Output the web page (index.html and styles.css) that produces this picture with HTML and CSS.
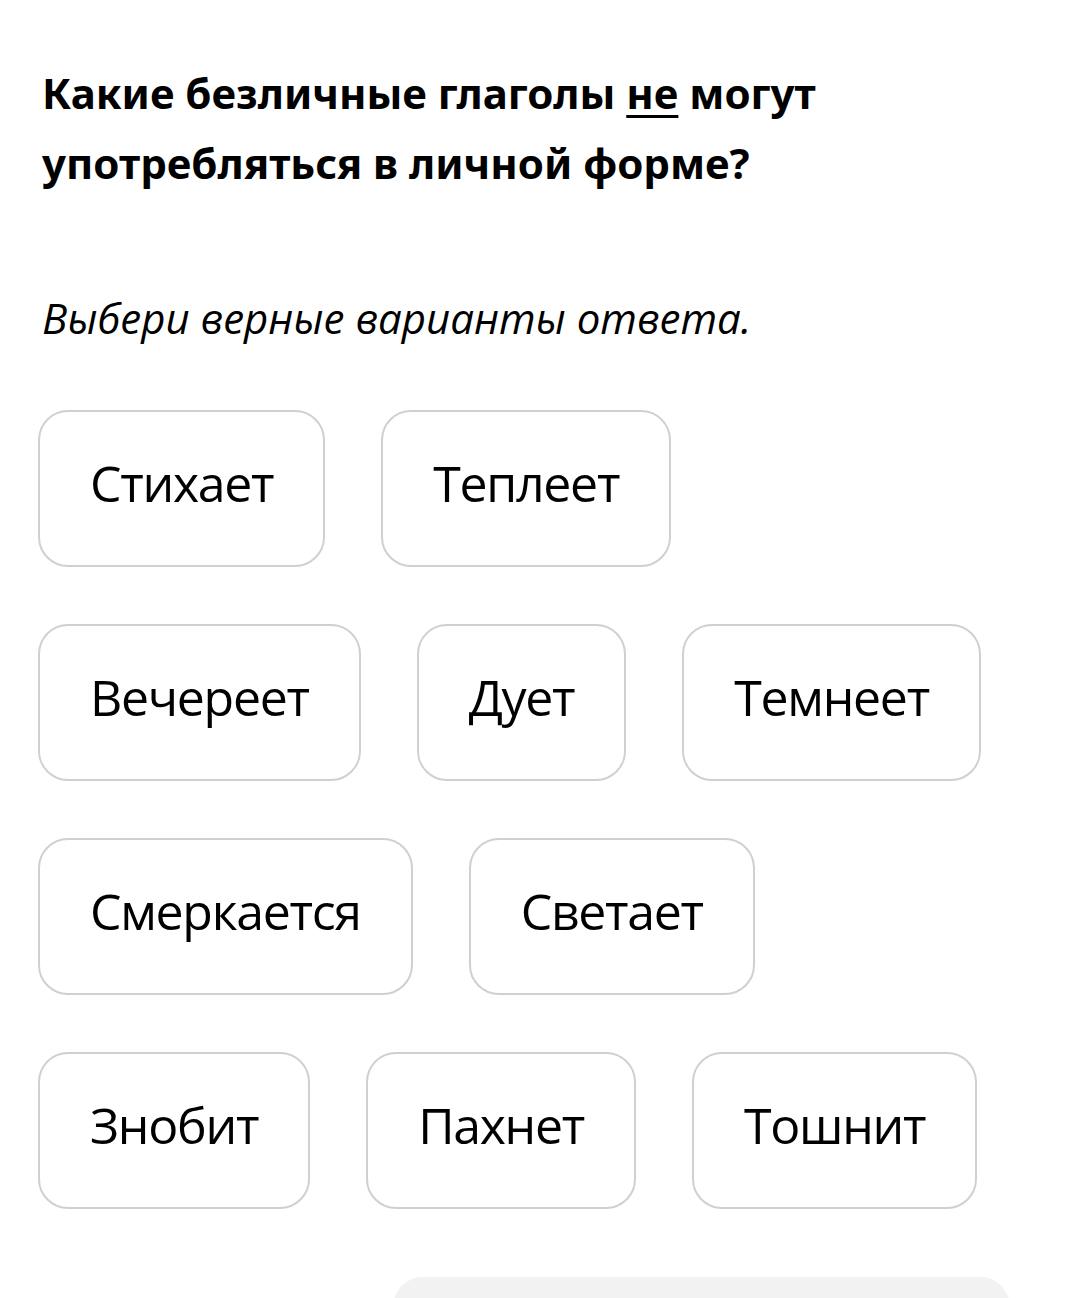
FILE: index.html
```html
<!DOCTYPE html>
<html lang="ru">

<head>
  <meta charset="UTF-8">
  <meta name="viewport" content="width=device-width, initial-scale=1.0">
  <title>Безличные глаголы</title>
  <link rel="stylesheet" href="styles.css">
</head>

<body>
  <div class="task">
    <h1 class="question">Какие безличные глаголы <u>не</u> могут употребляться в личной форме?</h1>
    <p class="hint">Выбери верные варианты ответа.</p>

    <div class="options">
      <div class="row">
        <div class="option">Стихает</div>
        <div class="option">Теплеет</div>
      </div>
      <div class="row">
        <div class="option">Вечереет</div>
        <div class="option">Дует</div>
        <div class="option">Темнеет</div>
      </div>
      <div class="row">
        <div class="option">Смеркается</div>
        <div class="option">Светает</div>
      </div>
      <div class="row">
        <div class="option">Знобит</div>
        <div class="option">Пахнет</div>
        <div class="option">Тошнит</div>
      </div>
    </div>

    <div class="footer">
      <div class="skip"></div>
      <div class="check"></div>
    </div>
  </div>
</body>

</html>
```

FILE: styles.css
```css
body {
  margin: 0;
  background: #fff;
  color: #000;
  font-family: 'Open Sans', 'Noto Sans', sans-serif;
}

.task {
  padding: 58px 40px 0 38px;
}

.question {
  margin: 0 0 0 4px;
  font-size: 42px;
  line-height: 70px;
  font-weight: 700;
  font-family: 'Noto Sans', sans-serif;
  max-width: 820px;
}

.question u {
  text-underline-offset: 6px;
  text-decoration-thickness: 3px;
}

.hint {
  margin: 90px 0 0 4px;
  font-size: 42px;
  line-height: 60px;
  font-style: italic;
}

.options {
  margin-top: 62px;
  display: flex;
  flex-direction: column;
  gap: 57px;
}

.row {
  display: flex;
  gap: 56px;
}

.option {
  height: 141px;
  padding: 0 50px 12px;
  border: 2px solid #d0d0d0;
  border-radius: 30px;
  display: flex;
  align-items: center;
  font-size: 50px;
  letter-spacing: -1.3px;
}

.footer {
  margin-top: 68px;
  display: flex;
  justify-content: space-between;
}

.check {
  width: 617px;
  height: 60px;
  margin-right: 16px;
  background: #f2f2f2;
  border-radius: 30px 30px 0 0;
}
```
